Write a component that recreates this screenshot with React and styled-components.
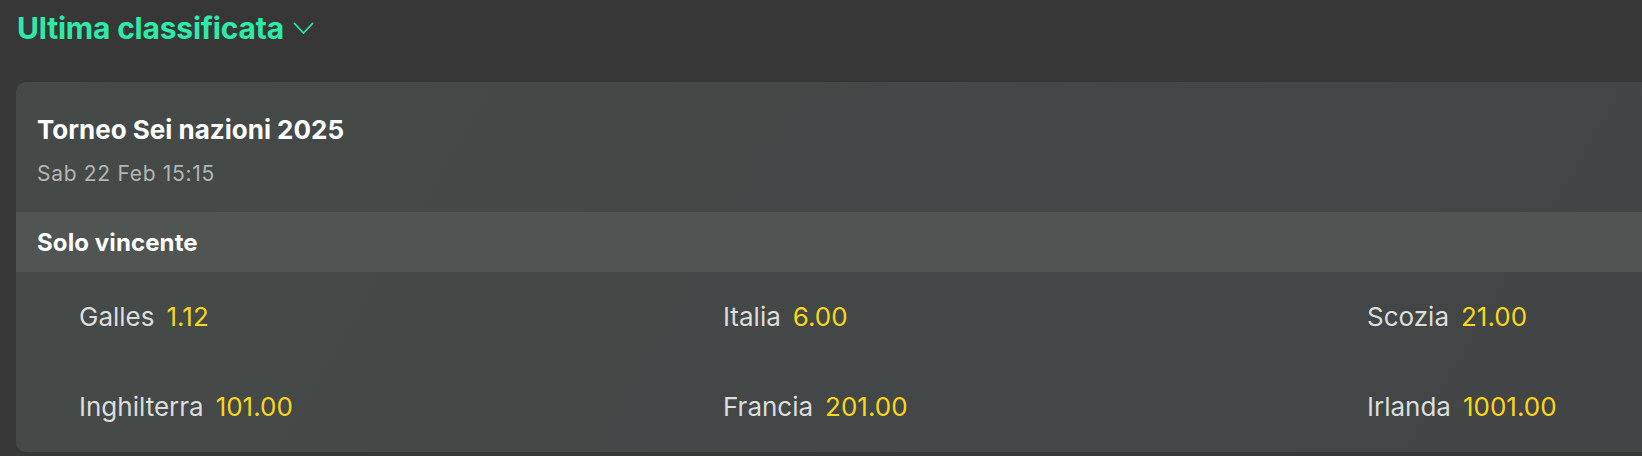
import React from 'react';
import styled, { createGlobalStyle } from 'styled-components';

const GlobalStyle = createGlobalStyle`
  html, body {
    margin: 0;
    padding: 0;
    background: #373737;
    overflow: hidden;
  }
  body {
    font-family: "Inter", "Noto Sans", sans-serif;
  }
`;

const Page = styled.div`
  width: max-content;
  padding: 0 16px;
  box-sizing: border-box;
`;

const TitleRow = styled.div`
  display: flex;
  align-items: center;
  gap: 9px;
  height: 56px;
  padding-left: 1px;
  color: #2deaa8;
  margin-bottom: 26px;
  h1 {
    margin: 0;
    font-size: 30px;
    font-weight: 700;
    letter-spacing: -0.2px;
  }
`;

const Card = styled.section`
  width: 1932px;
  border-radius: 10px;
  overflow: hidden;
  background: linear-gradient(120deg, #454a48 0%, #434646 60%, #424444 100%);
`;

const CardHeader = styled.div`
  height: 130px;
  box-sizing: border-box;
  padding: 33px 21px 0;
  h2 {
    margin: 0;
    color: #ffffff;
    font-size: 26px;
    font-weight: 700;
    line-height: 30px;
  }
  p {
    margin: 17px 0 0;
    color: #b3b5b4;
    font-size: 21px;
    line-height: 24px;
    letter-spacing: 0.7px;
  }
`;

const MarketBar = styled.div`
  height: 60px;
  display: flex;
  align-items: center;
  padding: 0 21px;
  background: #505452;
  color: #ffffff;
  font-size: 24px;
  font-weight: 700;
  letter-spacing: 0.1px;
`;

const Selections = styled.div`
  display: grid;
  grid-template-columns: repeat(3, 644px);
  grid-auto-rows: 90px;
`;

const Selection = styled.div`
  display: flex;
  align-items: center;
  gap: 12px;
  padding-left: 63px;
  padding-bottom: 2px;
  font-size: 26px;
`;

const Name = styled.span`
  color: #dcdddc;
`;

const Odds = styled.span`
  color: #f7d71b;
`;

const Chevron = () => (
  <svg width="21" height="13" viewBox="0 0 21 13" fill="none">
    <path d="M1.5 1.5 L10.5 11 L19.5 1.5" stroke="#2deaa8" strokeWidth="1.8" strokeLinecap="round" strokeLinejoin="round" />
  </svg>
);

const selections = [
  { name: 'Galles', odds: '1.12' },
  { name: 'Italia', odds: '6.00' },
  { name: 'Scozia', odds: '21.00' },
  { name: 'Inghilterra', odds: '101.00' },
  { name: 'Francia', odds: '201.00' },
  { name: 'Irlanda', odds: '1001.00' },
];

export default function App() {
  return (
    <Page>
      <GlobalStyle />
      <TitleRow>
        <h1>Ultima classificata</h1>
        <Chevron />
      </TitleRow>
      <Card>
        <CardHeader>
          <h2>Torneo Sei nazioni 2025</h2>
          <p>Sab 22 Feb 15:15</p>
        </CardHeader>
        <MarketBar>Solo vincente</MarketBar>
        <Selections>
          {selections.map((s) => (
            <Selection key={s.name}>
              <Name>{s.name}</Name>
              <Odds>{s.odds}</Odds>
            </Selection>
          ))}
        </Selections>
      </Card>
    </Page>
  );
}
